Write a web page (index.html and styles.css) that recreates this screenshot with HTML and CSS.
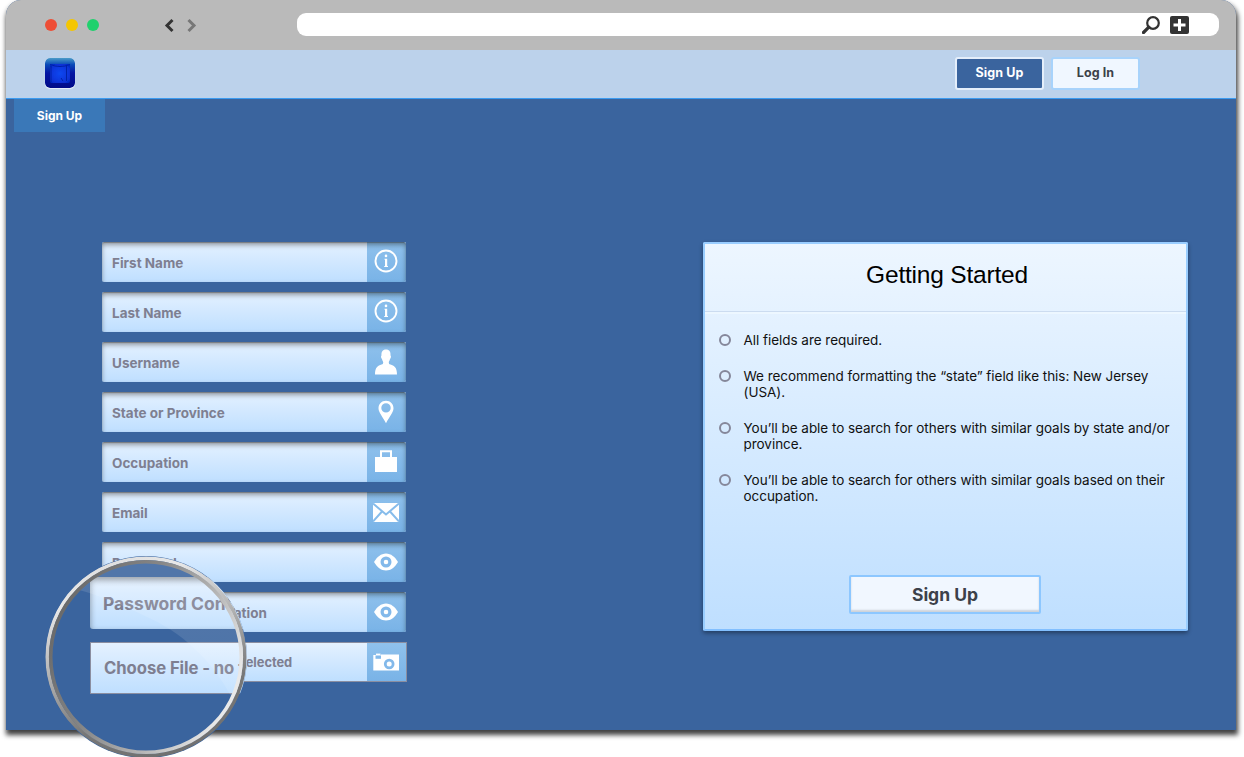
FILE: index.html
```
<!DOCTYPE html>
<html lang="en">
<head>
<meta charset="utf-8">
<title>Sign Up</title>
<link rel="stylesheet" href="styles.css">
</head>
<body>
<div class="window">
  <header class="chrome">
    <div class="dots"><i class="dot red"></i><i class="dot yellow"></i><i class="dot green"></i></div>
    <svg class="arrows" width="34" height="16" viewBox="0 0 34 16" fill="none" stroke-width="3">
      <path d="M9.500 2L4 7.500L9.500 13" stroke="#333"/><path d="M25.500 2L31 7.500L25.500 13" stroke="#777"/>
    </svg>
    <div class="address">
      <svg width="18" height="18" viewBox="0 0 18 18" fill="none" stroke="#333"><circle cx="11" cy="7" r="5.800" stroke-width="2.200"/><path d="M6.800 11.200L1.500 16.500" stroke-width="3.200" stroke-linecap="round"/></svg>
      <svg width="19" height="18" viewBox="0 0 19 18"><rect width="19" height="18" rx="2" fill="#333"/><path d="M9.500 3v12M3.500 9h12" stroke="#fff" stroke-width="3"/></svg>
    </div>
  </header>
  <nav class="topbar">
    <svg class="logo" width="30" height="30" viewBox="0 0 30 30">
      <defs>
        <linearGradient id="edge" x2="0" y2="1"><stop offset="0" stop-color="#4a9cc8"/><stop offset=".22" stop-color="#0a4ab8"/><stop offset=".5" stop-color="#0416a4"/><stop offset="1" stop-color="#020c88"/></linearGradient>
        <radialGradient id="core" r=".7"><stop offset="0" stop-color="#0d48f0"/><stop offset=".6" stop-color="#0836dc"/><stop offset="1" stop-color="#0526c0"/></radialGradient>
        <filter id="soft"><feGaussianBlur stdDeviation=".6"/></filter>
      </defs>
      <rect width="30" height="30" rx="5" fill="url(#edge)"/>
      <rect x="5" y="6" width="20" height="19" rx="2" fill="url(#core)" filter="url(#soft)"/>
      <path d="M6 8v16M21.500 8v15M5 6.500q10 4 20 0M16 20l2 3" fill="none" stroke="#0420a8" filter="url(#soft)"/>
    </svg>
    <div class="actions"><a class="btn primary">Sign Up</a><a class="btn">Log In</a></div>
  </nav>
  <main class="page">
    <a class="tab">Sign Up</a>
    <form class="fields">
      <div class="field"><span class="label">First Name</span><span class="icon"><svg class="info" width="24" height="24" viewBox="0 0 24 24"><circle cx="12" cy="12" r="10.500" fill="none" stroke="#fff" stroke-width="1.900"/><path d="M10.500 9.800H13.200V17H14V18H10.200V17H11V10.800H10.500Z" fill="#fff"/><circle cx="12" cy="6.900" r="1.300" fill="#fff"/></svg></span></div>
      <div class="field"><span class="label">Last Name</span><span class="icon"><svg class="info" width="24" height="24" viewBox="0 0 24 24"><circle cx="12" cy="12" r="10.500" fill="none" stroke="#fff" stroke-width="1.900"/><path d="M10.500 9.800H13.200V17H14V18H10.200V17H11V10.800H10.500Z" fill="#fff"/><circle cx="12" cy="6.900" r="1.300" fill="#fff"/></svg></span></div>
      <div class="field"><span class="label">Username</span><span class="icon"><svg width="24" height="26" viewBox="0 0 24 26"><path d="M12 .5C15.500 .5 16.800 3 16.500 6.500C17.400 6.700 16.900 9.500 16 10.100C15.700 11.500 15.200 12.300 14.800 13C14.800 14.600 15 15 16.500 15.600C20 17 23 18 23 25.500H1C1 18 4 17 7.500 15.600C9 15 9.200 14.600 9.200 13C8.800 12.300 8.300 11.500 8 10.100C7.100 9.500 6.600 6.700 7.500 6.500C7.200 3 8.500 .5 12 .5Z" fill="#fff"/></svg></span></div>
      <div class="field"><span class="label">State or Province</span><span class="icon"><svg width="16" height="24" viewBox="0 0 16 24"><path fill-rule="evenodd" d="M8 .8C12.400.8 15.500 4 15.500 8.200C15.500 12.500 11 17 8 23.300C5 17 .5 12.500.5 8.200C.5 4 3.600.8 8 .8ZM8 3.200A4.700 4.700 0 1 0 8 12.600A4.700 4.700 0 1 0 8 3.200Z" fill="#fff"/></svg></span></div>
      <div class="field"><span class="label">Occupation</span><span class="icon"><svg class="bag" width="22" height="22" viewBox="0 0 22 22"><path d="M0 7h22v15H0z" fill="#fff"/><path d="M6 7V1.200h10V7" fill="none" stroke="#fff" stroke-width="2"/></svg></span></div>
      <div class="field"><span class="label">Email</span><span class="icon"><svg class="mail" width="26" height="19" viewBox="0 0 26 19"><path d="M0 0h26v19H0z" fill="#fff"/><path d="M0 .5L13 11.500L26 .5M0 18.500L9 8.500M26 18.500L17 8.500" fill="none" stroke="#86bceb" stroke-width="2"/></svg></span></div>
      <div class="field"><span class="label">Password</span><span class="icon"><svg width="24" height="18" viewBox="0 0 24 18"><path d="M0 9C3 4 7 .5 12 .5S21 4 24 9C21 14 17 17.500 12 17.500S3 14 0 9Z" fill="#fff"/><circle cx="12" cy="9" r="3.900" fill="#fff" stroke="#83b9ea" stroke-width="3.200"/></svg></span></div>
      <div class="field"><span class="label">Password Confirmation</span><span class="icon"><svg width="24" height="18" viewBox="0 0 24 18"><path d="M0 9C3 4 7 .5 12 .5S21 4 24 9C21 14 17 17.500 12 17.500S3 14 0 9Z" fill="#fff"/><circle cx="12" cy="9" r="3.900" fill="#fff" stroke="#83b9ea" stroke-width="3.200"/></svg></span></div>
      <div class="field file"><span class="label">Choose File - no file selected</span><span class="icon"><svg width="26" height="18" viewBox="0 0 26 18"><path d="M.3 2H8V1.500H26V17.500H.3Z" fill="#fff"/><path d="M2.500 2.500h5.500v3.300H2.500z" fill="#83b9ea"/><path d="M3 .6h4.500v1.400H3z" fill="#fff"/><circle cx="16.200" cy="11" r="3.900" fill="#fff" stroke="#83b9ea" stroke-width="2.800"/></svg></span></div>
    </form>
    <section class="card">
      <h1>Getting Started</h1>
      <ul>
        <li>All fields are required.</li>
        <li>We recommend formatting the “state” field like this: New Jersey<br>(USA).</li>
        <li>You’ll be able to search for others with similar goals by state and/or<br>province.</li>
        <li>You’ll be able to search for others with similar goals based on their<br>occupation.</li>
      </ul>
      <a class="submit">Sign Up</a>
    </section>
  </main>
</div>
<div class="lens">
  <div class="zoomed first"><span>Password Confir</span></div>
  <div class="zoomed second"><span>Choose File - no f</span></div>
  <svg class="rim" width="202" height="202" viewBox="0 0 202 202" fill="none">
    <defs>
      <linearGradient id="outer" gradientUnits="userSpaceOnUse" x1="60" y1="0" x2="135" y2="200"><stop offset="0" stop-color="#ddd"/><stop offset=".15" stop-color="#e8e8e8"/><stop offset=".45" stop-color="#b0b0b0"/><stop offset=".75" stop-color="#777"/><stop offset="1" stop-color="#707070"/></linearGradient>
      <linearGradient id="inner" gradientUnits="userSpaceOnUse" x1="15" y1="60" x2="185" y2="140"><stop offset="0" stop-color="#6b6b6b"/><stop offset=".35" stop-color="#858585"/><stop offset=".7" stop-color="#b5b5b5"/><stop offset="1" stop-color="#e9e9e9"/></linearGradient>
      <linearGradient id="glare" x2="0" y2="1"><stop offset="0" stop-color="#fff" stop-opacity=".12"/><stop offset="1" stop-color="#fff" stop-opacity=".1"/></linearGradient>
    </defs>
    <path d="M34 34A95 95 0 0 1 188 144C168 104 135 75 100 60C75 48 50 38 34 34Z" fill="url(#glare)"/>
    <circle cx="101" cy="101" r="98.700" stroke="url(#outer)" stroke-width="3.600"/>
    <circle cx="101" cy="101" r="95.300" stroke="url(#inner)" stroke-width="3.600"/>
  </svg>
</div>
</body>
</html>
```
FILE: styles.css
```
* { box-sizing: border-box; }
body { margin: 0; width: 1244px; height: 757px; overflow: hidden; position: relative; background: #fff; font-family: Inter, "Liberation Sans", sans-serif; }
.window { margin-left: 6px; width: 1230px; height: 730px; border-radius: 15px 15px 0 0; box-shadow: 1px 4px 5px 1px rgba(0,0,0,.75); background: #3a649e; }
.chrome { height: 50px; background: #bababa; border-radius: 15px 15px 0 0; display: flex; align-items: center; padding: 0 17px 0 39px; }
.dots { display: flex; gap: 9px; width: 118px; }
.dot { width: 12px; height: 12px; border-radius: 50%; }
.red { background: #ee4e36; }
.yellow { background: #f4c600; }
.green { background: #20d16d; }
.arrows { margin-top: 1px; }
.address { margin-left: 100px; margin-bottom: 1px; flex: 1; height: 23px; border-radius: 9px; background: #fff; display: flex; justify-content: flex-end; align-items: center; gap: 10px; padding-right: 30px; }
.topbar { height: 49px; background: #bcd2eb; border-bottom: 1px solid #3b9bf0; display: flex; justify-content: space-between; padding: 7px 96px 0 39px; }
.logo { margin-top: 1px; border-radius: 5px; box-shadow: 0 1px 1px rgba(255,255,255,.7); }
.actions { display: flex; gap: 7px; }
.btn { width: 89px; height: 33px; border: 2px solid #a8d3fb; border-radius: 3px; background: #f0f7ff; color: #3c4149; text-align: center; font-size: 12.5px; font-weight: 700; line-height: 28px; letter-spacing: .1px; }
.btn.primary { border-color: #e4eefa; background: #3a649e; color: #fff; }
.page { height: 631px; display: grid; grid-template-columns: 96px 304px 485px; grid-template-rows: 33px 520px; row-gap: 110px; }
.tab { grid-column: 1 / 4; margin-left: 8px; width: 91px; height: 33px; background: #3a78b8; color: #fff; font-size: 12px; font-weight: 700; text-align: center; line-height: 33px; }
.fields { grid-column: 2; display: flex; flex-direction: column; gap: 9.950px; }
.field { position: relative; flex: none; display: flex; width: 304px; height: 40px; border-radius: 2px; background: linear-gradient(#e4f1ff, #bfdfff); overflow: hidden; }
.field::after { content: ""; position: absolute; inset: 0; border-radius: 2px; box-shadow: inset 0 3px 5px rgba(0,0,0,.36), inset 0 1px 1px rgba(70,60,50,.35); }
.file { width: 305px; border: 1px solid #8b8ea0; border-radius: 0; }
.file::after { display: none; }
.label { width: 265px; padding-left: 10px; color: #7e7f91; font-size: 13.500px; font-weight: 700; line-height: 42px; white-space: nowrap; }
.file .label { padding-left: 9px; line-height: 40px; width: 264px; font-size: 12.900px; letter-spacing: -.05px; }
.icon { flex: 1; background: linear-gradient(#8fc1ec, #79b3e7); display: flex; align-items: center; justify-content: center; padding-right: 1px; }
.icon .info { margin-bottom: 2px; }
.mail { margin-top: 2px; }
.bag { margin-bottom: 1px; }
.card { grid-column: 3; margin-left: 297px; width: 485px; height: 389px; border: 2px solid #99cdff; border-bottom-color: #82bfff; border-radius: 2px; background: linear-gradient(#edf6ff, #bfdfff); box-shadow: 0 2px 4px rgba(0,0,0,.4); display: flex; flex-direction: column; align-items: center; }
h1 { margin: 0; width: 100%; height: 70px; border-bottom: 2px solid #edf7ff; box-shadow: inset 0 -1px #ccdcf0; font: 400 24.500px/62px "Liberation Sans", Arial, sans-serif; letter-spacing: -.2px; color: #000; text-align: center; padding-left: 3px; }
ul { list-style: none; margin: 18px 0 0; padding: 0; width: 100%; height: 243px; }
li { position: relative; padding-left: 38.500px; margin-bottom: 19.200px; font-size: 13.500px; line-height: 16.400px; letter-spacing: -.035px; color: #111; white-space: nowrap; }
li::before { content: ""; box-sizing: border-box; position: absolute; left: 14px; top: 2px; width: 12px; height: 12px; border: 2px solid #85879a; border-radius: 50%; }
.submit { width: 192px; height: 39px; margin-right: 1px; border: 2px solid #8dc7ff; border-radius: 2px; background: #f1f7ff; box-shadow: inset 0 -2px 2px rgba(0,0,0,.15); color: #3c4149; font-size: 17.500px; font-weight: 700; text-align: center; line-height: 35px; }
.lens { position: absolute; left: 45px; top: 556px; width: 202px; height: 202px; border-radius: 50%; overflow: hidden; background: #3a649e; padding: 21px 0 0 45px; }
.zoomed { width: 180px; height: 52px; margin-bottom: 13px; background: linear-gradient(#e4f1ff, #bfdfff); color: #7e7f91; font-size: 17.500px; font-weight: 700; line-height: 53px; padding-left: 13px; white-space: nowrap; border-radius: 3px; }
.first { box-shadow: inset 0 3px 6px rgba(0,0,0,.4); }
.second { border: 1px solid #8b8ea0; border-radius: 0; line-height: 51px; font-size: 16.700px; letter-spacing: -.08px; }
.rim { position: absolute; left: 0; top: 0; }
```
